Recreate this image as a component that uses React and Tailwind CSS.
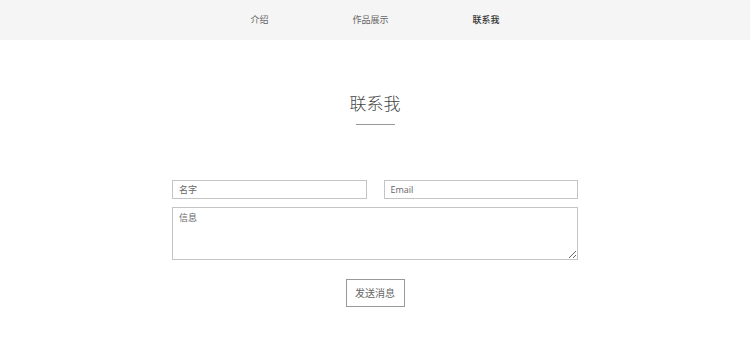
const font = "font-['Open_Sans','Noto_Sans_CJK_SC',sans-serif]";

export default function App() {
  return (
    <div className={`min-h-[347px] bg-white ${font}`}>
      <nav className="h-10 bg-[#f5f5f5] flex items-center justify-center gap-[84px] text-[9px]">
        <a className="text-[#666]">介绍</a>
        <a className="text-[#666]">作品展示</a>
        <a className="text-[#333] font-medium">联系我</a>
      </nav>

      <section className="flex flex-col items-center pt-[52px]">
        <h2 className="text-[17px] leading-6 text-[#444] font-light">联系我</h2>
        <div className="w-[39px] h-px bg-[#999] mt-[8px]" />

        <form className="w-[406px] mt-[55px] flex flex-col">
          <div className="flex gap-[17px]">
            <input
              placeholder="名字"
              className="flex-1 min-w-0 h-[19px] border border-[#c4c4c4] px-[6px] text-[9px] text-[#444] placeholder:text-[#666] outline-none"
            />
            <input
              placeholder="Email"
              className="flex-1 min-w-0 h-[19px] border border-[#c4c4c4] px-[6px] text-[9px] text-[#444] placeholder:text-[#666] outline-none"
            />
          </div>
          <textarea
            placeholder="信息"
            className="mt-[8px] h-[53px] border border-[#c4c4c4] px-[6px] py-[3px] text-[9px] text-[#444] placeholder:text-[#666] outline-none"
          />
          <div className="flex justify-center mt-[19px]">
            <button
              type="button"
              className="w-[59px] h-[28px] border border-[#999] text-[10px] text-[#666] bg-white"
            >
              发送消息
            </button>
          </div>
        </form>
      </section>
    </div>
  );
}
